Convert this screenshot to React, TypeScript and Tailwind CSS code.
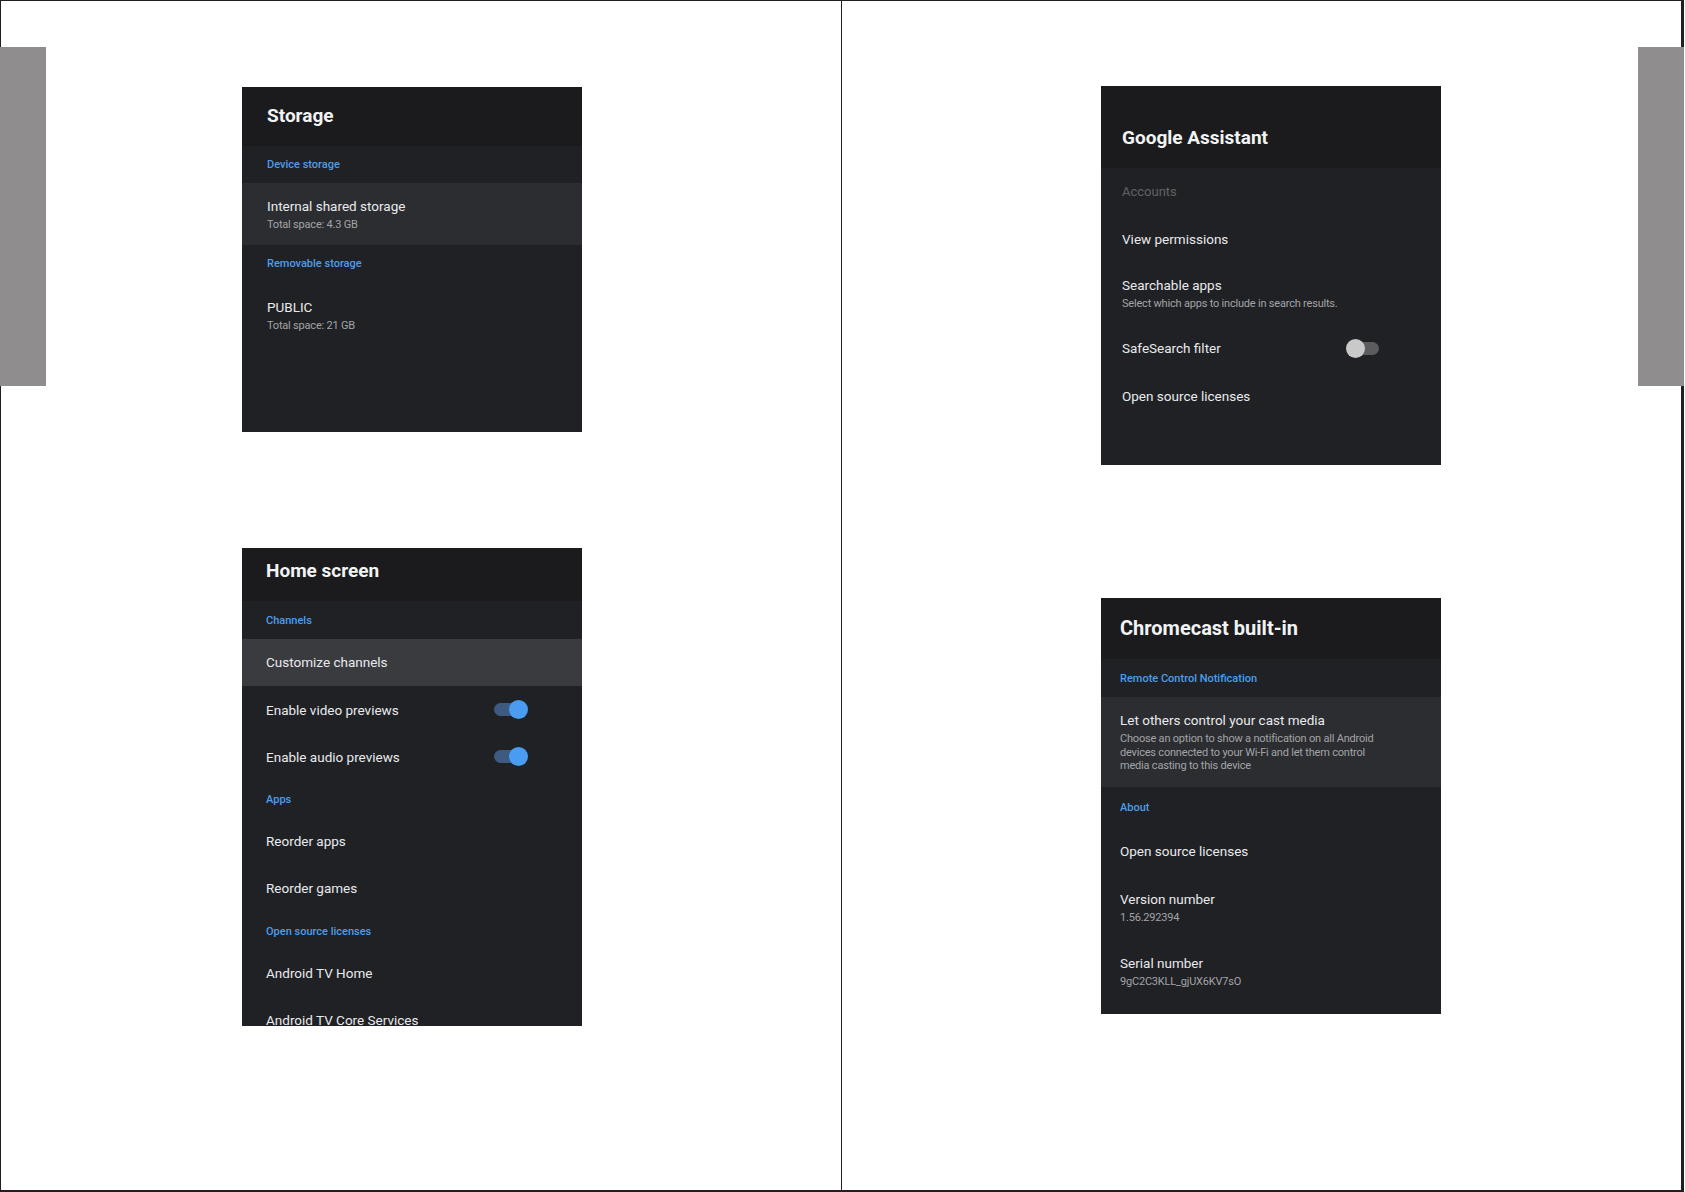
import React from 'react';

const blue = 'text-[#4d9de9]';

function Section({ label, className }: { label: string; className: string }) {
  return (
    <div className={`flex items-center text-[11px] font-medium ${blue} ${className}`}>
      {label}
    </div>
  );
}

function Item({
  title,
  sub,
  className,
  toggle,
}: {
  title: string;
  sub?: string;
  className: string;
  toggle?: React.ReactNode;
}) {
  return (
    <div className={`flex items-center ${className}`}>
      <div className="flex-1">
        <div className="text-[13.5px] leading-[18px] text-[#e8eaed]">{title}</div>
        {sub && <div className="text-[11px] leading-[14px] tracking-[-0.2px] text-[#a2a4a8] mt-[3px]">{sub}</div>}
      </div>
      {toggle}
    </div>
  );
}

function Toggle({ on }: { on: boolean }) {
  return on ? (
    <div className="relative w-[34px] h-[19px] shrink-0">
      <div className="absolute left-0 right-[3px] top-[3px] h-[13px] rounded-full bg-[#3d5b80]" />
      <div className="absolute right-0 top-0 w-[19px] h-[19px] rounded-full bg-[#4a9cf2]" />
    </div>
  ) : (
    <div className="relative w-[33px] h-[19px] shrink-0">
      <div className="absolute left-[4px] right-0 top-[3px] h-[13px] rounded-full bg-[#5c5c5e]" />
      <div className="absolute left-0 top-0 w-[19px] h-[19px] rounded-full bg-[#c9c9c9]" />
    </div>
  );
}

function StoragePanel() {
  return (
    <div className="w-[340px] h-[345px] bg-[#202124] flex flex-col">
      <div className="h-[59px] bg-[#1b1b1d] flex items-center pl-[25px] text-[19px] font-bold text-[#f1f3f4]">Storage</div>
      <Section label="Device storage" className="h-[37px] pl-[25px] pt-[2px]" />
      <Item title="Internal shared storage" sub="Total space: 4.3 GB" className="h-[62px] pl-[25px] bg-[#2c2d30]" />
      <Section label="Removable storage" className="h-[37px] pl-[25px] pt-[2px]" />
      <Item title="PUBLIC" sub="Total space: 21 GB" className="h-[62px] pl-[25px] pt-[4px]" />
    </div>
  );
}

function HomePanel() {
  return (
    <div className="w-[340px] h-[478px] bg-[#202124] flex flex-col overflow-hidden">
      <div className="h-[53px] shrink-0 bg-[#1b1b1d] flex items-center pb-[6px] pl-[24px] text-[19px] font-bold text-[#f1f3f4]">Home screen</div>
      <Section label="Channels" className="h-[38px] shrink-0 pl-[24px] pt-[2px]" />
      <Item title="Customize channels" className="h-[47px] shrink-0 pl-[24px] bg-[#3a3b3f] pb-[1px]" />
      <Item title="Enable video previews" className="h-[47px] shrink-0 pl-[24px] pr-[54px]" toggle={<Toggle on />} />
      <Item title="Enable audio previews" className="h-[47px] shrink-0 pl-[24px] pr-[54px]" toggle={<Toggle on />} />
      <Section label="Apps" className="h-[38px] shrink-0 pl-[24px] pt-[2px]" />
      <Item title="Reorder apps" className="h-[47px] shrink-0 pl-[24px] pb-[1px]" />
      <Item title="Reorder games" className="h-[47px] shrink-0 pl-[24px] pb-[1px]" />
      <Section label="Open source licenses" className="h-[38px] shrink-0 pl-[24px] pt-[2px]" />
      <Item title="Android TV Home" className="h-[47px] shrink-0 pl-[24px] pb-[1px]" />
      <Item title="Android TV Core Services" className="h-[47px] shrink-0 pl-[24px] pb-[1px]" />
    </div>
  );
}

function AssistantPanel() {
  return (
    <div className="w-[340px] h-[379px] bg-[#202124] flex flex-col">
      <div className="h-[82px] bg-[#1b1b1d] flex items-center pt-[22px] pl-[21px] text-[19px] font-bold text-[#f1f3f4]">Google Assistant</div>
      <div className="h-[48px] flex items-center pl-[21px] text-[13px] text-[#5f6165]">Accounts</div>
      <Item title="View permissions" className="h-[47px] pl-[21px] pb-[2px]" />
      <Item
        title="Searchable apps"
        sub="Select which apps to include in search results."
        className="h-[61px] pl-[21px]"
      />
      <Item title="SafeSearch filter" className="h-[48px] pl-[21px] pr-[62px]" toggle={<Toggle on={false} />} />
      <Item title="Open source licenses" className="h-[48px] pl-[21px] pb-[1px]" />
    </div>
  );
}

function ChromecastPanel() {
  return (
    <div className="w-[340px] h-[416px] bg-[#202124] flex flex-col">
      <div className="h-[61px] bg-[#1b1b1d] flex items-center pl-[19px] pb-[2px] text-[20px] font-bold text-[#f1f3f4]">Chromecast built-in</div>
      <Section label="Remote Control Notification" className="h-[38px] pl-[19px] pt-[2px]" />
      <div className="h-[90px] bg-[#2c2d30] pl-[19px] pt-[14px]">
        <div className="text-[13.5px] leading-[18px] text-[#e8eaed]">Let others control your cast media</div>
        <div className="text-[11px] leading-[13.5px] tracking-[-0.2px] text-[#a2a4a8] mt-[3px] w-[260px]">
          Choose an option to show a notification on all Android devices connected to your Wi-Fi and let them control media casting to this device
        </div>
      </div>
      <Section label="About" className="h-[40px] pl-[19px] pt-[2px]" />
      <Item title="Open source licenses" className="h-[48px] pl-[19px] pb-[1px]" />
      <Item title="Version number" sub="1.56.292394" className="h-[64px] pl-[19px]" />
      <Item title="Serial number" sub="9gC2C3KLL_gjUX6KV7sO" className="h-[64px] pl-[19px]" />
    </div>
  );
}

export default function App() {
  return (
    <div className="relative w-[1685px] h-[1192px] bg-white overflow-hidden font-['Roboto',sans-serif]">
      <div className="flex w-[1684px] h-full border-t border-l border-b-2 border-r-[3px] border-[#231f20]">
        <div className="w-[841px] h-full border-r border-[#231f20] flex flex-col pl-[241px] pt-[86px]">
          <StoragePanel />
          <div className="mt-[116px]">
            <HomePanel />
          </div>
        </div>
        <div className="flex-1 h-full flex flex-col pl-[259px] pt-[85px]">
          <AssistantPanel />
          <div className="mt-[133px]">
            <ChromecastPanel />
          </div>
        </div>
      </div>
      {/* page edge tabs */}
      <div className="absolute left-0 top-[47px] w-[46px] h-[339px] bg-[#8f8d8e]" />
      <div className="absolute left-[1638px] top-[47px] w-[46px] h-[339px] bg-[#8f8d8e]" />
    </div>
  );
}
